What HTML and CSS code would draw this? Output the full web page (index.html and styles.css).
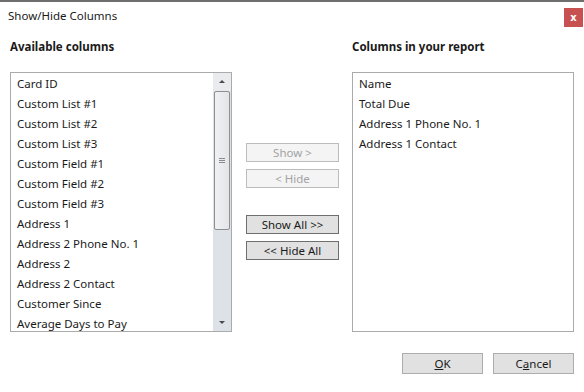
FILE: index.html
```html
<!DOCTYPE html>
<html lang="en">
<head>
    <meta charset="UTF-8">
    <title>Show/Hide Columns</title>
    <link rel="stylesheet" href="styles.css">
</head>
<body>

<!-- Dialog Window -->
<div class="window">
    <div class="titlebar">
        <span class="title">Show/Hide Columns</span>
        <button class="close-btn">x</button>
    </div>

    <div class="columns">
        <!-- Available Columns -->
        <div class="column">
            <h2>Available columns</h2>
            <div class="listbox">
                <ul class="items">
                    <li>Card ID</li>
                    <li>Custom List #1</li>
                    <li>Custom List #2</li>
                    <li>Custom List #3</li>
                    <li>Custom Field #1</li>
                    <li>Custom Field #2</li>
                    <li>Custom Field #3</li>
                    <li>Address 1</li>
                    <li>Address 2 Phone No. 1</li>
                    <li>Address 2</li>
                    <li>Address 2 Contact</li>
                    <li>Customer Since</li>
                    <li>Average Days to Pay</li>
                </ul>
                <div class="scrollbar">
                    <div class="arrow up"></div>
                    <div class="thumb"><span class="grip"></span></div>
                    <div class="track"></div>
                    <div class="arrow down"></div>
                </div>
            </div>
        </div>

        <!-- Move Buttons -->
        <div class="middle">
            <button class="btn" disabled>Show &gt;</button>
            <button class="btn" disabled>&lt; Hide</button>
            <button class="btn spaced">Show All &gt;&gt;</button>
            <button class="btn">&lt;&lt; Hide All</button>
        </div>

        <!-- Columns in Report -->
        <div class="column">
            <h2>Columns in your report</h2>
            <div class="listbox">
                <ul class="items">
                    <li>Name</li>
                    <li>Total Due</li>
                    <li>Address 1 Phone No. 1</li>
                    <li>Address 1 Contact</li>
                </ul>
            </div>
        </div>
    </div>

    <div class="footer">
        <button class="btn dialog-btn"><u>O</u>K</button>
        <button class="btn dialog-btn">C<u>a</u>ncel</button>
    </div>
</div>

</body>
</html>
```

FILE: styles.css
```css
body {
    margin: 0;
    font-family: 'Noto Sans', sans-serif;
    font-size: 11.5px;
    color: #1a1a1a;
    background: #ffffff;
}

/* Window frame */
.window {
    width: 584px;
    height: 392px;
    box-sizing: border-box;
    border-top: 2px solid #6e6e6e;
    background: #ffffff;
}

.titlebar {
    height: 28px;
    display: flex;
    align-items: center;
    justify-content: space-between;
    padding-left: 8px;
    padding-right: 1px;
}

.title {
    line-height: 16px;
}

.close-btn {
    width: 19px;
    height: 19px;
    margin-top: 2px;
    border: none;
    padding: 0;
    background: #c75050;
    color: #ffffff;
    font-family: 'DejaVu Sans', sans-serif;
    font-size: 10px;
    font-weight: bold;
    line-height: 19px;
}

/* Three column layout */
.columns {
    display: grid;
    grid-template-columns: 222px 120px 222px;
    padding: 0 10px;
}

.column h2 {
    margin: 9px 0 17px;
    font-size: 11.5px;
    font-weight: bold;
    line-height: 16px;
}

.listbox {
    height: 260px;
    box-sizing: border-box;
    border: 1px solid #ababab;
    display: flex;
    overflow: hidden;
}

.items {
    list-style: none;
    margin: 0;
    padding: 1px 0 0 6px;
    flex: 1;
}

.items li {
    height: 20px;
    line-height: 20px;
    white-space: nowrap;
}

/* Scrollbar */
.scrollbar {
    width: 18px;
    display: flex;
    flex-direction: column;
    background: #dde1e8;
}

.arrow {
    height: 18px;
    position: relative;
    background: #e9ebef;
}

.arrow::after {
    content: '';
    position: absolute;
    left: 6px;
    border-left: 3px solid transparent;
    border-right: 3px solid transparent;
}

.arrow.up::after {
    top: 7px;
    border-bottom: 3px solid #4a4a4a;
}

.arrow.down {
    background: #dde1e8;
}

.arrow.down::after {
    top: 8px;
    border-top: 3px solid #4a4a4a;
}

.thumb {
    height: 139px;
    margin: 0 1px 0 1px;
    box-sizing: border-box;
    border: 1px solid #8f8f8f;
    border-radius: 2px;
    background: linear-gradient(to right, #f0f1f3, #e3e5e9);
    display: flex;
    align-items: center;
    justify-content: center;
}

.grip {
    width: 6px;
    height: 5px;
    border-top: 1px solid #8a8a8a;
    border-bottom: 1px solid #8a8a8a;
    box-sizing: border-box;
    position: relative;
}

.grip::after {
    content: '';
    position: absolute;
    left: 0;
    right: 0;
    top: 1px;
    border-top: 1px solid #8a8a8a;
}

.track {
    flex: 1;
}

/* Buttons */
.middle {
    display: flex;
    flex-direction: column;
    align-items: flex-start;
    padding: 113px 0 0 14px;
}

.btn {
    font-family: 'Noto Sans', sans-serif;
    font-size: 11.5px;
    color: #1a1a1a;
    background: #e1e1e1;
    border: 1px solid #6f6f6f;
    padding: 0;
    height: 19px;
    line-height: 16px;
}

.middle .btn {
    width: 93px;
    margin-bottom: 7px;
}

.btn:disabled {
    background: #f4f4f4;
    border-color: #bcbcbc;
    color: #a3a3a3;
}

.middle .btn.spaced {
    margin-top: 20px;
}

.footer {
    display: flex;
    justify-content: flex-end;
    gap: 10px;
    padding: 21px 10px 0 0;
}

.dialog-btn {
    width: 81px;
    height: 21px;
    border-color: #adadad;
}
```
